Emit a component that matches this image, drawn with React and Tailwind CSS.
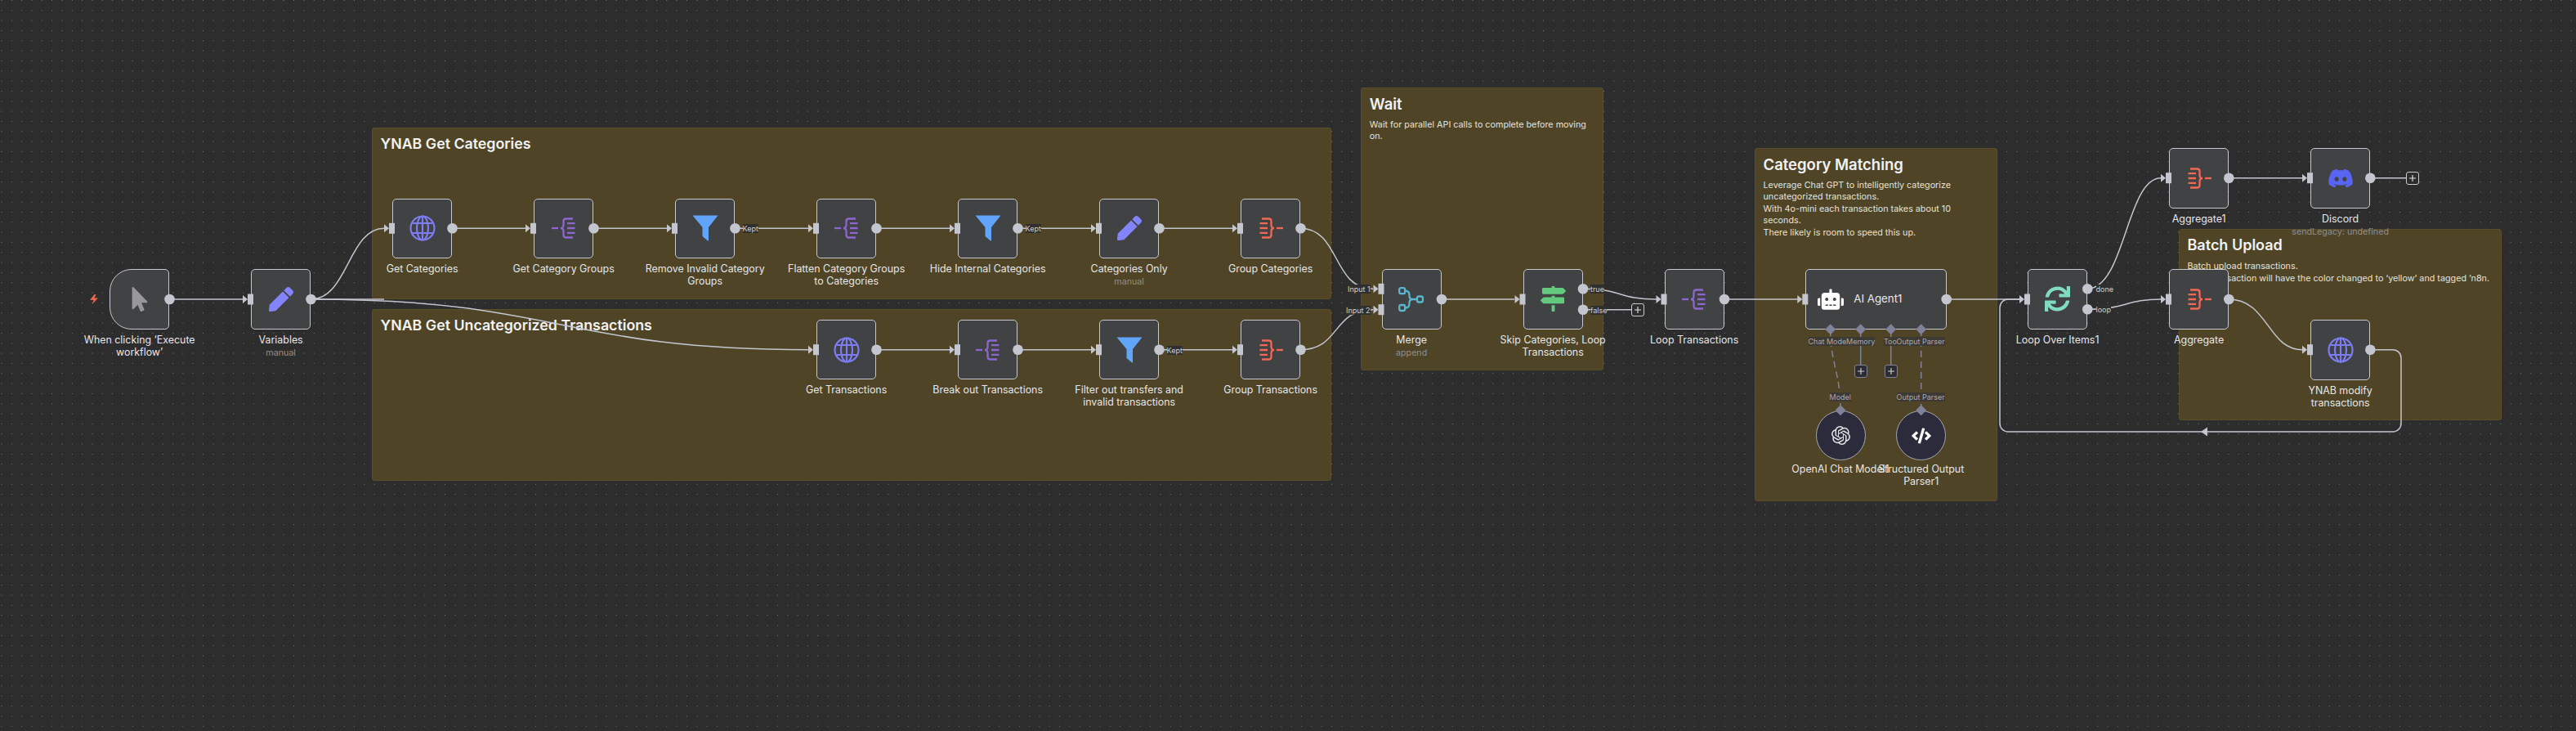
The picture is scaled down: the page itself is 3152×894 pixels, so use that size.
import { FaMousePointer, FaPen, FaMapSigns, FaSync, FaDiscord, FaRobot, FaCode } from 'react-icons/fa'
import { SiOpenai } from 'react-icons/si'

const GlobeIcon = () => (
  <svg width="32" height="32" viewBox="0 0 32 32" fill="none" stroke="#7d7cf0" strokeWidth="2.2">
    <circle cx="16" cy="16" r="14.5" />
    <ellipse cx="16" cy="16" rx="7" ry="14.5" />
    <path d="M16 1.500v29M3.500 10h25M3.500 22h25" />
  </svg>
)

// split out brace, the aggregate one is the same drawing mirrored
const BraceIcon = ({ color, flip }) => (
  <svg width="30" height="28" viewBox="0 0 30 28" fill="none" stroke={color} strokeWidth="2.300" className={flip ? '-scale-x-100' : ''}>
    <path d="M0 14h8" />
    <path d="M26 2.500h-8.500c-2 0-3 1-3 3v4.500c0 2.500-1.500 4-3.500 4c2 0 3.500 1.500 3.500 4v4.500c0 2 1 3 3 3h8.500" />
    <path d="M19 8.200h9.500M19 14h9.500M19 19.800h9.500" />
  </svg>
)

const FunnelIcon = () => (
  <svg width="32" height="32" viewBox="0 0 32 32" fill="#60a5fa">
    <path d="M0.500 0.500h31L20 15v16.500h-1L12.500 26V15z" />
  </svg>
)

const MergeIcon = () => (
  <svg width="32" height="32" viewBox="0 0 32 32" fill="none" stroke="#5bb5cd" strokeWidth="2.300">
    <rect x="1.200" y="2.200" width="7" height="7" rx="2.200" />
    <rect x="1.200" y="23" width="7" height="7" rx="2.200" />
    <rect x="23" y="12.500" width="7" height="7" rx="2.200" />
    <path d="M8.200 5.700c3.500 0 5.300 2 5.300 5v1c0 2.500 1.500 4.300 4 4.300h5.500M8.200 26.500c3.500 0 5.300-2 5.300-5v-1c0-2.500 1.500-4.500 4-4.500" />
  </svg>
)

const cursor = <FaMousePointer size={30} color="#98989b" />
const pen = <FaPen size={30} color="#8484fa" />
const globe = <GlobeIcon />
const splitOut = <BraceIcon color="#8e66d0" />
const aggregate = <BraceIcon color="#ee6a55" flip />
const funnel = <FunnelIcon />

const nodes = [
  { pos: 'left-[134px] top-[329.300px]', icon: cursor, label: ["When clicking ‘Execute", "workflow’"], round: 'rounded-l-[27px] rounded-r-[5px]' },
  { pos: 'left-[307px] top-[329.300px]', icon: pen, label: ['Variables'], sub: 'manual' },
  { pos: 'left-[480px] top-[242.700px]', icon: globe, label: ['Get Categories'] },
  { pos: 'left-[653px] top-[242.700px]', icon: splitOut, label: ['Get Category Groups'] },
  { pos: 'left-[826px] top-[242.700px]', icon: funnel, label: ['Remove Invalid Category', 'Groups'] },
  { pos: 'left-[999px] top-[242.700px]', icon: splitOut, label: ['Flatten Category Groups', 'to Categories'] },
  { pos: 'left-[1172px] top-[242.700px]', icon: funnel, label: ['Hide Internal Categories'] },
  { pos: 'left-[1345px] top-[242.700px]', icon: pen, label: ['Categories Only'], sub: 'manual' },
  { pos: 'left-[1518px] top-[242.700px]', icon: aggregate, label: ['Group Categories'] },
  { pos: 'left-[999px] top-[391px]', icon: globe, label: ['Get Transactions'] },
  { pos: 'left-[1172px] top-[391px]', icon: splitOut, label: ['Break out Transactions'] },
  { pos: 'left-[1345px] top-[391px]', icon: funnel, label: ['Filter out transfers and', 'invalid transactions'] },
  { pos: 'left-[1518px] top-[391px]', icon: aggregate, label: ['Group Transactions'] },
  { pos: 'left-[1690.500px] top-[329.300px]', icon: <MergeIcon />, label: ['Merge'], sub: 'append' },
  { pos: 'left-[1863.500px] top-[329.300px]', icon: <FaMapSigns size={31} color="#63c97e" />, label: ['Skip Categories, Loop', 'Transactions'] },
  { pos: 'left-[2036.500px] top-[329.300px]', icon: splitOut, label: ['Loop Transactions'] },
  { pos: 'left-[2481px] top-[329.300px]', icon: <FaSync size={31} color="#7fdcc1" />, label: ['Loop Over Items1'] },
  { pos: 'left-[2654px] top-[181.300px]', icon: aggregate, label: ['Aggregate1'] },
  { pos: 'left-[2827px] top-[181.300px]', icon: <FaDiscord size={32} color="#5865f2" />, label: ['Discord'], sub: 'sendLegacy: undefined' },
  { pos: 'left-[2654px] top-[329.300px]', icon: aggregate, label: ['Aggregate'] },
  { pos: 'left-[2827px] top-[391.300px]', icon: globe, label: ['YNAB modify', 'transactions'] },
]

const groups = [
  { pos: 'left-[455px] top-[156px] w-[1174px] h-[210px]', size: 'text-[17.800px]', title: 'YNAB Get Categories' },
  { pos: 'left-[455px] top-[378.300px] w-[1174px] h-[210px]', size: 'text-[17.800px]', title: 'YNAB Get Uncategorized Transactions' },
  { pos: 'left-[1665.300px] top-[106.700px] w-[296.400px] h-[346px]', size: 'text-[18.500px]', title: 'Wait', text: ['Wait for parallel API calls to complete before moving', 'on.'] },
  { pos: 'left-[2147px] top-[180.700px] w-[296.700px] h-[432.600px]', size: 'text-[18.500px]', title: 'Category Matching', text: ['Leverage Chat GPT to intelligently categorize', 'uncategorized transactions.', 'With 4o-mini each transaction takes about 10', 'seconds.', 'There likely is room to speed this up.'] },
  { pos: 'left-[2666px] top-[280px] w-[395px] h-[234px]', size: 'text-[18px]', title: 'Batch Upload', text: ['Batch upload transactions.', 'Each transaction will have the color changed to ‘yellow’ and tagged ’n8n.'] },
]

// wire paths, all end at the arrow tip of the input handle
const wires = [
  'M207 366H297',
  'M380 366H470',
  'M380 366C426 366 426 279.300 470 279.300',
  'M380 366C686 366 686 427.700 989 427.700',
  'M553 279.300H643', 'M726 279.300H816', 'M899 279.300H989', 'M1072 279.300H1162', 'M1245 279.300H1335', 'M1418 279.300H1508',
  'M1591 279.300C1640 279.300 1630 353.300 1680 353.300',
  'M1072 427.700H1162', 'M1245 427.700H1335', 'M1418 427.700H1508',
  'M1591 427.700C1640 427.700 1630 378.700 1680 378.700',
  'M1764 366H1853',
  'M1937 353.300C1985 353.300 1980 366 2027 366',
  'M1937 378.700H1996',
  'M2110 366H2200',
  'M2382 366H2471',
  'M2554 353.300C2600 353.300 2602 217.700 2644 217.700',
  'M2554 378.300C2600 378.300 2602 366 2644 366',
  'M2727 217.700H2817',
  'M2900 217.700H2944',
  'M2727 366C2775 366 2775 427.700 2817 427.700',
  'M2900 427.700H2928a10 10 0 0 1 10 10V518a10 10 0 0 1 -10 10H2457a10 10 0 0 1 -10 -10V376a10 10 0 0 1 10 -10H2471',
]

const inputs = [
  [307, 366], [480, 279.3], [653, 279.3], [826, 279.3], [999, 279.3], [1172, 279.3], [1345, 279.3], [1518, 279.3],
  [999, 427.7], [1172, 427.7], [1345, 427.7], [1518, 427.7],
  [1690.5, 353.3], [1690.5, 378.7], [1863.5, 366], [2036.5, 366], [2209.3, 366], [2481, 366],
  [2654, 217.7], [2827, 217.7], [2654, 366], [2827, 427.7],
]

const outputs = [
  [207.5, 366], [380.5, 366], [553.5, 279.3], [726.5, 279.3], [899.5, 279.3], [1072.5, 279.3], [1245.5, 279.3], [1418.5, 279.3], [1591.5, 279.3],
  [1072.5, 427.7], [1245.5, 427.7], [1418.5, 427.7], [1591.5, 427.7],
  [1764, 366], [1937, 353.3], [1937, 378.7], [2110, 366], [2381.7, 366],
  [2554.3, 353.3], [2554.3, 378.3], [2727.3, 217.7], [2900.3, 217.7], [2727.3, 366], [2900.3, 427.7],
]

const diamonds = [[2239.7, 402.7], [2276.7, 402.7], [2313.7, 402.7], [2350.7, 402.7], [2252, 501.7], [2350.7, 501.7]]

const tags = [
  { pos: 'left-[908.500px] top-[274px]', text: 'Kept' },
  { pos: 'left-[1254.500px] top-[274px]', text: 'Kept' },
  { pos: 'left-[1427.500px] top-[422.500px]', text: 'Kept' },
  { pos: 'left-[1649px] top-[348px]', text: 'Input 1' },
  { pos: 'left-[1647px] top-[373.500px]', text: 'Input 2' },
  { pos: 'left-[1946px] top-[348px]', text: 'true' },
  { pos: 'left-[1946px] top-[373.500px]', text: 'false' },
  { pos: 'left-[2564.500px] top-[348px]', text: 'done' },
  { pos: 'left-[2564.500px] top-[373px]', text: 'loop' },
]

const supplyTags = [
  { pos: 'left-[2212.500px] top-[411.500px]', text: 'Chat Model' },
  { pos: 'left-[2259px] top-[411.500px]', text: 'Memory' },
  { pos: 'left-[2305px] top-[411.500px]', text: 'Tool' },
  { pos: 'left-[2320.500px] top-[411.500px]', text: 'Output Parser' },
  { pos: 'left-[2238.500px] top-[479.500px]', text: 'Model' },
  { pos: 'left-[2320.500px] top-[479.500px]', text: 'Output Parser' },
]

const Node = ({ pos, icon, label, sub, round = 'rounded-[5px]' }) => (
  <div className={`absolute ${pos} w-[73.300px]`}>
    <div className={`flex h-[73.300px] items-center justify-center border-[1.500px] border-[#c6c8d1] bg-[#414244] ${round}`}>
      {icon}
    </div>
    <div className="absolute left-1/2 top-[78.300px] flex w-[200px] -translate-x-1/2 flex-col items-center">
      {label.map((line) => (
        <span key={line} className="whitespace-nowrap text-[12.400px] leading-[15px] text-[#e6e6e8]">{line}</span>
      ))}
      {sub && <span className="mt-[2px] whitespace-nowrap text-[10.700px] leading-[14px] text-[#8d8d92]">{sub}</span>}
    </div>
  </div>
)

const AddBox = ({ pos, dim }) => (
  <div className={`absolute ${pos} flex h-[16px] w-[16px] items-center justify-center rounded-[3px] border-[1.500px] ${dim ? 'border-[#7f8298] bg-[#2c2c33] text-[#d0d0d4]' : 'border-[#c8cad2] bg-[#2d2d2e] text-[#e6e6e8]'}`}>
    <svg width="8" height="8" viewBox="0 0 8 8" stroke="currentColor" strokeWidth="1.100"><path d="M4 0v8M0 4h8" /></svg>
  </div>
)

export default function App() {
  return (
    <div className="relative h-[894px] w-[3152px] overflow-hidden bg-[#2d2d2e] font-['Inter',sans-serif]">
      {/* dotted canvas */}
      <svg className="absolute inset-0" width="3152" height="894">
        <defs>
          <pattern id="dots" x="1.500" y="0" width="12.330" height="12.330" patternUnits="userSpaceOnUse">
            <rect width="1" height="1" fill="#77777a" />
          </pattern>
        </defs>
        <rect width="3152" height="894" fill="url(#dots)" />
      </svg>

      {groups.map((g) => (
        <div key={g.title} className={`absolute ${g.pos} rounded-[3px] border border-[#5a4e2a] bg-[#4f4526] pl-[9.500px] pt-[7px]`}>
          <div className={`whitespace-nowrap ${g.size} font-semibold leading-[24px] text-[#f2f2f2]`}>{g.title}</div>
          {g.text && (
            <div className="mt-[7px]">
              {g.text.map((line) => (
                <div key={line} className="whitespace-nowrap text-[10.750px] leading-[14.500px] text-[#e4e2dc]">{line}</div>
              ))}
            </div>
          )}
        </div>
      ))}

      {/* wires run above the group titles */}
      <svg className="absolute inset-0" width="3152" height="894" fill="none">
        {wires.map((d) => (
          <path key={d} d={d} stroke="#c3c5cf" strokeWidth="1.500" />
        ))}
        <path d="M2701 522.500v11l-8-5.500z" fill="#c3c5cf" />
        <path d="M2276.700 403v43M2313.700 403v43" stroke="#7f8298" strokeWidth="1.500" />
        <path d="M2239.700 403C2239.700 445 2252 455 2252 502M2350.700 403V502" stroke="#7f8298" strokeWidth="1.500" strokeDasharray="8 5" />
      </svg>

      {nodes.map((n) => (
        <Node key={n.pos} {...n} />
      ))}

      <div className="absolute left-[2209.300px] top-[329.300px] flex h-[73.300px] w-[172.400px] items-center rounded-[5px] border-[1.500px] border-[#c6c8d1] bg-[#414244] pl-[14px]">
        <FaRobot size={32} color="#ffffff" />
        <span className="ml-[12px] text-[13.300px] text-[#e8e8ea]">AI Agent1</span>
      </div>

      <div className="absolute left-[2221.500px] top-[502px] flex h-[61px] w-[61px] items-center justify-center rounded-full border-[1.500px] border-[#a6a8b0] bg-[#2b2b3b]">
        <SiOpenai size={23} color="#e2e2e4" />
      </div>
      <div className="absolute left-[2320.200px] top-[502px] flex h-[61px] w-[61px] items-center justify-center rounded-full border-[1.500px] border-[#a6a8b0] bg-[#2b2b3b]">
        <FaCode size={24} color="#ffffff" />
      </div>
      <div className="absolute left-[2152px] top-[566px] w-[200px] text-center text-[12.400px] leading-[15px] text-[#e6e6e8]">OpenAI Chat Model1</div>
      <div className="absolute left-[2250.700px] top-[566px] w-[200px] text-center text-[12.400px] leading-[15px] text-[#e6e6e8]">
        <div>Structured Output</div>
        <div>Parser1</div>
      </div>

      <svg className="absolute inset-0" width="3152" height="894">
        {inputs.map(([x, y]) => (
          <g key={`${x}-${y}`} fill="#c3c5cf">
            <rect x={x - 4} y={y - 6.5} width="7" height="13" />
            <path d={`M${x - 10} ${y - 5}L${x - 4} ${y}L${x - 10} ${y + 5}z`} />
          </g>
        ))}
        {outputs.map(([x, y]) => (
          <circle key={`${x}-${y}`} cx={x} cy={y} r="6.300" fill="#c3c5cf" />
        ))}
        {diamonds.map(([x, y]) => (
          <path key={`${x}-${y}`} d={`M${x} ${y - 6.5}L${x + 6.5} ${y}L${x} ${y + 6.5}L${x - 6.5} ${y}z`} fill="#7f8298" />
        ))}
        {/* trigger bolt */}
        <path d="M115.500 360L110 367h4.500L113 372L120 364.500h-4.500L117.500 360z" fill="#e8664f" />
      </svg>

      {tags.map((t) => (
        <div key={t.pos} className={`absolute ${t.pos} whitespace-nowrap bg-[#2f2f2e] text-[9px] leading-[11px] text-[#cfcfd2]`}>{t.text}</div>
      ))}
      {supplyTags.map((t) => (
        <div key={t.pos} className={`absolute ${t.pos} whitespace-nowrap bg-[#3d3a36] text-[9px] leading-[11px] text-[#a8a8ae]`}>{t.text}</div>
      ))}

      <AddBox pos="left-[1995.500px] top-[370.500px]" />
      <AddBox pos="left-[2943.500px] top-[209.500px]" />
      <AddBox pos="left-[2268.500px] top-[446px]" dim />
      <AddBox pos="left-[2305.500px] top-[446px]" dim />
    </div>
  )
}
